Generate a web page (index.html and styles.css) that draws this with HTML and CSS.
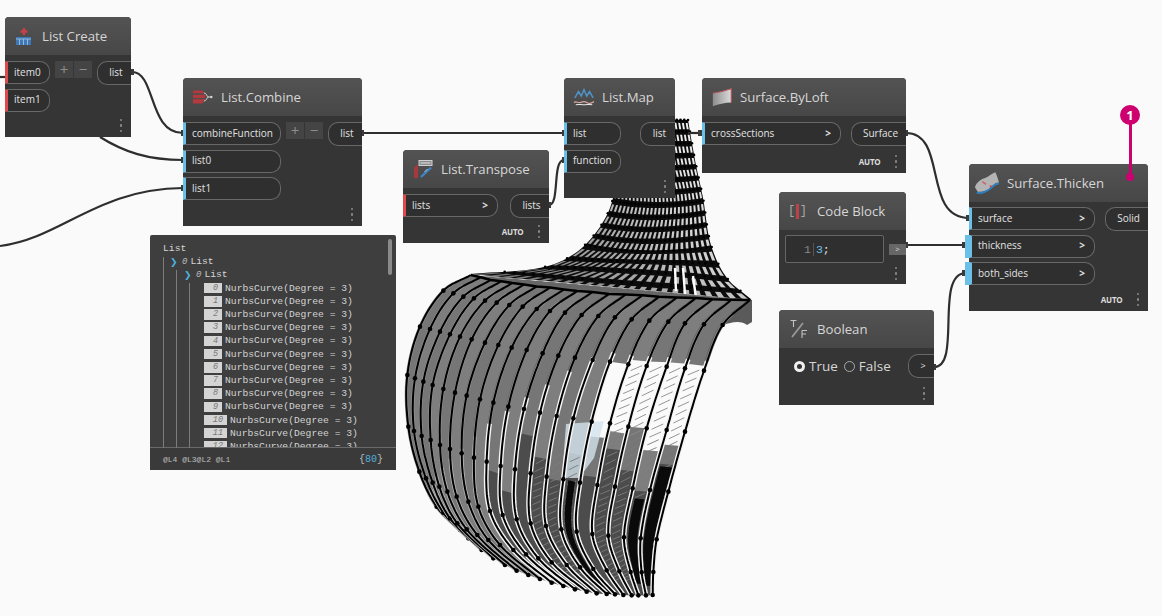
FILE: index.html
```html
<!DOCTYPE html>
<html lang="en">
  <head>
    <meta charset="UTF-8" />
    <title>Surface.Thicken graph</title>
    <link rel="stylesheet" href="styles.css">
  </head>
  <body>
    <div class="canvas">
      <svg class="layer" id="surface" width="1162" height="616"></svg>

      <svg class="layer" width="1162" height="616">
        <g class="wires">
          <path d="M0 77H5" />
          <path d="M132 72C156 72 148 133 183 133" />
          <path d="M100 137C124 152 148 160 183 160" />
          <path d="M0 246C62 238 96 189 183 188" />
          <path d="M362 133H564" />
          <path d="M549 205C560 205 552 160 564 160" />
          <path d="M688 133H702" />
          <path d="M906 133C948 133 922 218 969 218" />
          <path d="M906 245H966" />
          <path d="M934 367C962 367 934 273 966 273" />
        </g>
        <g class="stubs">
          <path d="M131 72h3M181 133h3M181 160h3M181 188h3M361 133h3M562 133h3M562 160h3M548 205h3" />
          <path d="M698 133h4M905 133h3M966 218h3M905 245h3M962 245h3M933 367h3M962 273h3" />
        </g>
      </svg>

      <!-- List Create -->
      <div class="node node-create">
        <div class="node-head">
          <svg class="icon" viewBox="0 0 22 22">
            <path d="M11 3v7M7.500 6.500h7" stroke="#c8404a" stroke-width="2.400" fill="none" />
            <rect x="3" y="12" width="15" height="8" fill="#3f78b5" />
            <path d="M3 14h15M6.500 14v6M10.500 14v6M14.500 14v6" stroke="#8fb8dd" stroke-width="1" fill="none" />
          </svg>
          <span class="node-title">List Create</span>
        </div>
        <div class="node-body">
          <div class="inputs">
            <div class="port port-red">item0</div>
            <div class="port port-red">item1</div>
          </div>
          <div class="add-remove"><span class="mini">+</span><span class="mini">−</span></div>
          <div class="out">list</div>
        </div>
        <div class="node-foot"><span class="dots"><i></i><i></i><i></i></span></div>
      </div>

      <!-- List.Combine -->
      <div class="node node-combine">
        <div class="node-head">
          <svg class="icon" viewBox="0 0 24 22">
            <path d="M1 4h10l3 3H1zM1 8.500h13.500v3.500H1zM1 13.500h13.500L11 18H1z" fill="#b23a3e" />
            <path d="M13 6.500c3 0 3 4.500 5 4.500c-2 0-2 4.500-5 4.500M17 11h5" stroke="#d8d8d8" stroke-width="1" fill="none" />
            <circle cx="21" cy="11" r="1.300" fill="#d8d8d8" />
          </svg>
          <span class="node-title">List.Combine</span>
        </div>
        <div class="node-body">
          <div class="inputs">
            <div class="port port-blue">combineFunction</div>
            <div class="port port-blue">list0</div>
            <div class="port port-blue">list1</div>
          </div>
          <div class="add-remove"><span class="mini">+</span><span class="mini">−</span></div>
          <div class="out">list</div>
        </div>
        <div class="node-foot"><span class="dots"><i></i><i></i><i></i></span></div>
      </div>

      <!-- List.Transpose -->
      <div class="node node-transpose">
        <div class="node-head">
          <svg class="icon" viewBox="0 0 22 22">
            <rect x="7" y="2.500" width="13" height="5" fill="#8c8c8c" stroke="#d0d0d0" stroke-width="1" />
            <path d="M8.500 5h10" stroke="#e4e4e4" stroke-width="1" fill="none" />
            <path d="M2 9.500l4-3V20H2z" fill="#a8383c" />
            <path d="M9 19L19 9.500" stroke="#3f86c4" stroke-width="2.400" fill="none" />
            <path d="M12.500 14l3-3" stroke="#a9cfe8" stroke-width="1" fill="none" />
          </svg>
          <span class="node-title">List.Transpose</span>
        </div>
        <div class="node-body">
          <div class="inputs">
            <div class="port port-red">lists<b>&gt;</b></div>
          </div>
          <div class="out">lists</div>
        </div>
        <div class="node-foot"><span class="auto">AUTO</span><span class="dots"><i></i><i></i><i></i></span></div>
      </div>

      <!-- List.Map -->
      <div class="node node-map">
        <div class="node-head">
          <svg class="icon" viewBox="0 0 24 22">
            <path d="M2 12l4-7 3 5 3-7 3 7 3-5 4 7" stroke="#4e92c8" stroke-width="1.700" fill="none" />
            <path d="M1 17c3-2 4 1 7 0s4-2 7 0 4 1 8-1" stroke="#d9a9a4" stroke-width="1.400" fill="none" />
            <path d="M3 19.500c3-1 5 0 9 0s6-1 9 0" stroke="#e8e8e8" stroke-width="1.100" fill="none" />
          </svg>
          <span class="node-title">List.Map</span>
        </div>
        <div class="node-body">
          <div class="inputs">
            <div class="port port-blue">list</div>
            <div class="port port-blue">function</div>
          </div>
          <div class="out">list</div>
        </div>
        <div class="node-foot"><span class="dots"><i></i><i></i><i></i></span></div>
      </div>

      <!-- Surface.ByLoft -->
      <div class="node node-loft">
        <div class="node-head">
          <svg class="icon" viewBox="0 0 24 22">
            <defs>
              <linearGradient id="loftFill" x1="0" x2="1" y1="0" y2="0">
                <stop offset="0" stop-color="#8c8c8c" />
                <stop offset="1" stop-color="#dcdcdc" />
              </linearGradient>
            </defs>
            <path d="M2 7c6-1 14-3 20-5v15c-7 0-14 2-20 4z" fill="url(#loftFill)" />
            <path d="M2 7c6-1 14-3 20-5v15" stroke="#b9555e" stroke-width="1.100" fill="none" />
          </svg>
          <span class="node-title">Surface.ByLoft</span>
        </div>
        <div class="node-body">
          <div class="inputs">
            <div class="port port-blue">crossSections<b>&gt;</b></div>
          </div>
          <div class="out">Surface</div>
        </div>
        <div class="node-foot"><span class="auto">AUTO</span><span class="dots"><i></i><i></i><i></i></span></div>
      </div>

      <!-- Code Block -->
      <div class="node node-code">
        <div class="node-head">
          <span class="code-icon"><span>[</span><i></i><span>]</span></span>
          <span class="node-title">Code Block</span>
        </div>
        <div class="code-body">
          <div class="code-input"><span class="line-no">1</span><span class="code-text"><em>3</em>;</span></div>
          <span class="code-out">&gt;</span>
        </div>
        <div class="node-foot"><span class="dots"><i></i><i></i><i></i></span></div>
      </div>

      <!-- Boolean -->
      <div class="node node-bool">
        <div class="node-head">
          <svg class="icon" viewBox="0 0 22 22">
            <path d="M4 19L15 5" stroke="#9a9a9a" stroke-width="1.800" fill="none" />
            <path d="M2.500 2.500h6M5.500 2.500V9M14 12.500h5M14 12.500V20M14 16h4" stroke="#c4c4c4" stroke-width="1.100" fill="none" />
          </svg>
          <span class="node-title">Boolean</span>
        </div>
        <div class="bool-body">
          <span class="radio radio-on"></span><span class="radio-label">True</span>
          <span class="radio"></span><span class="radio-label">False</span>
          <div class="out out-bool">&gt;</div>
        </div>
        <div class="node-foot"><span class="dots"><i></i><i></i><i></i></span></div>
      </div>

      <!-- Surface.Thicken -->
      <div class="node node-thicken">
        <div class="node-head">
          <svg class="icon icon-wide" viewBox="0 0 28 27">
            <path d="M1 18C3 12 8 9 12 8C16 7 19 3 23 2C25 6 26 10 27 13C22 13 20 17 16 20C12 23 7 23 4 23Z" fill="#b4b4b4" />
            <path d="M3 24C8 25 13 23 17 20C20 17 23 14 27 14" stroke="#2f7fc0" stroke-width="2" fill="none" />
            <path d="M9 12l4 3" stroke="#c8646a" stroke-width="1.600" fill="none" />
            <circle cx="18" cy="17" r="1.200" fill="#c8464e" />
          </svg>
          <span class="node-title">Surface.Thicken</span>
        </div>
        <div class="node-body">
          <div class="inputs">
            <div class="port port-blue">surface<b>&gt;</b></div>
            <div class="port port-blue port-linked">thickness<b>&gt;</b></div>
            <div class="port port-blue port-linked">both_sides<b>&gt;</b></div>
          </div>
          <div class="out">Solid</div>
        </div>
        <div class="node-foot"><span class="auto">AUTO</span><span class="dots"><i></i><i></i><i></i></span></div>
      </div>

      <!-- Watch preview -->
      <div class="watch">
        <span class="scroll-thumb"></span>
        <span class="guide guide-1"></span>
        <span class="guide guide-2"></span>
        <span class="guide guide-3"></span>
        <div class="watch-list" id="watchList">
          <div class="watch-row">List</div>
          <div class="watch-row level-1"><span class="chevron">❯</span><i>0</i>List</div>
          <div class="watch-row level-2"><span class="chevron">❯</span><i>0</i>List</div>
        </div>
        <div class="watch-foot">
          <span class="levels">@L4 @L3@L2 @L1</span>
          <span class="count">{<em>80</em>}</span>
        </div>
      </div>

      <!-- Annotation marker -->
      <div class="marker">
        <span class="marker-badge">1</span>
        <span class="marker-line"></span>
        <span class="marker-dot"></span>
      </div>
    </div>
    <script src="script.js"></script>
  </body>
</html>
```

FILE: styles.css
```css
* {
  box-sizing: border-box;
}

body {
  margin: 0;
  background-color: #fafafa;
  font-family: "Open Sans", sans-serif;
}

.canvas {
  position: relative;
  width: 1162px;
  height: 616px;
  overflow: hidden;
  background-color: #fafafa;
}

.layer {
  position: absolute;
  left: 0;
  top: 0;
}

.wires path {
  fill: none;
  stroke: #2e2e2e;
  stroke-width: 2.200;
}

.stubs path {
  fill: none;
  stroke: #3a3a3a;
  stroke-width: 6;
}

/* Nodes */
.node {
  position: absolute;
  display: flex;
  flex-direction: column;
  background-color: #353535;
  border-radius: 4px 4px 0 0;
  color: #e2e2e2;
}

.node-create { left: 5px; top: 17px; width: 126px; height: 120px; }
.node-combine { left: 183px; top: 78px; width: 179px; height: 148px; }
.node-transpose { left: 403px; top: 150px; width: 146px; height: 93px; }
.node-map { left: 564px; top: 78px; width: 111px; height: 120px; }
.node-loft { left: 702px; top: 78px; width: 204px; height: 95px; }
.node-code { left: 779px; top: 192px; width: 127px; height: 92px; }
.node-bool { left: 779px; top: 310px; width: 155px; height: 95px; }
.node-thicken { left: 969px; top: 164px; width: 179px; height: 147px; }

.node-head {
  display: flex;
  align-items: center;
  gap: 7px;
  height: 38px;
  flex-shrink: 0;
  padding-left: 9px;
  background: linear-gradient(#535353, #474747);
  border-radius: 4px 4px 0 0;
}

.node-create .node-head { padding-left: 8px; }
.node-thicken .node-head { padding-left: 5px; }
.node-thicken .node-body { padding-top: 5px; }

.node-title {
  font-size: 13.2px;
  color: #d6d6d6;
  white-space: nowrap;
}

.icon {
  width: 22px;
  height: 22px;
  flex-shrink: 0;
}

.icon-wide {
  width: 26px;
  height: 26px;
}

.node-body {
  display: flex;
  justify-content: space-between;
  padding-top: 6px;
}

.inputs {
  display: flex;
  flex-direction: column;
  gap: 4.5px;
}

.node-create .inputs { width: 45px; }
.node-combine .inputs { width: 98px; }
.node-transpose .inputs { width: 95px; }
.node-map .inputs { width: 57px; }
.node-loft .inputs { width: 139px; }
.node-thicken .inputs { width: 126px; }

.port {
  display: flex;
  align-items: center;
  justify-content: space-between;
  height: 23px;
  padding: 0 9px 2px 6px;
  font-size: 10px;
  background-color: #2f2f2f;
  border: 1px solid #686868;
  border-left: 3px solid;
  border-radius: 0 10px 10px 0;
}

.port b {
  font-weight: 700;
  font-size: 10px;
}

.port-red { border-left-color: #e0484e; }
.port-blue { border-left-color: #6ac0e7; }
.port-linked { box-shadow: -4px 0 0 #6ac0e7; }

.out {
  display: flex;
  align-items: center;
  justify-content: center;
  height: 24px;
  padding: 0 5px 2px 8px;
  font-size: 10px;
  background-color: #2f2f2f;
  border: 1px solid #686868;
  border-right: 0;
  border-radius: 10px 0 0 10px;
}

.node-create .out { width: 34px; }
.node-combine .out { width: 34px; }
.node-transpose .out { width: 39px; }
.node-map .out { width: 35px; }
.node-loft .out { width: 55px; }
.node-thicken .out { width: 43px; }

.add-remove {
  display: flex;
  gap: 1px;
  margin-left: 5px;
  margin-right: auto;
}

.mini {
  display: flex;
  align-items: center;
  justify-content: center;
  width: 18px;
  height: 17px;
  font-size: 15px;
  line-height: 1;
  color: #8c8c8c;
  background-color: #444;
}

.node-foot {
  display: flex;
  justify-content: flex-end;
  align-items: center;
  gap: 14px;
  margin-top: auto;
  height: 23px;
  padding-right: 9px;
}

.auto {
  font-size: 8px;
  font-weight: 700;
  letter-spacing: -0.2px;
  color: #dcdcdc;
}

.dots {
  display: flex;
  flex-direction: column;
  gap: 3px;
}

.dots i {
  width: 2.5px;
  height: 2.5px;
  border-radius: 50%;
  background-color: #8a8a8a;
}

/* Code block */
.code-icon {
  display: flex;
  align-items: center;
  justify-content: space-between;
  width: 19px;
  margin-right: 3px;
  font-family: "Liberation Mono", monospace;
  font-size: 12px;
  color: #a8a8a8;
}

.code-icon i {
  width: 3px;
  height: 15px;
  background-color: #b8444a;
}

.code-body {
  display: flex;
  align-items: center;
  justify-content: space-between;
  padding: 5px 0 0 6px;
}

.code-input {
  display: flex;
  align-items: center;
  width: 99px;
  height: 28px;
  padding-left: 18px;
  font-family: "Liberation Mono", monospace;
  font-size: 11.5px;
  border: 1px solid #666;
  border-radius: 2px;
  background-color: #2f2f2f;
}

.line-no {
  padding-right: 2px;
  color: #888;
  border-right: 1px solid #555;
}

.code-text {
  padding-left: 2px;
}

.code-text em {
  font-style: normal;
  color: #6ac0e7;
}

.code-out {
  width: 17px;
  height: 11px;
  font-size: 8px;
  line-height: 10px;
  text-align: center;
  color: #ddd;
  background-color: #666;
}

/* Boolean */
.bool-body {
  display: flex;
  align-items: center;
  padding: 6px 0 0 15px;
}

.radio {
  width: 11px;
  height: 11px;
  border: 1px solid #aaa;
  border-radius: 50%;
  margin-right: 4px;
}

.radio-on {
  border: 3px solid #f0f0f0;
  background-color: #333;
}

.radio-label {
  margin-right: 6px;
  font-size: 13.5px;
  color: #d6d6d6;
}

.out-bool {
  width: 26px;
  margin-left: auto;
  font-size: 9px;
}

/* Watch */
.watch {
  position: absolute;
  left: 150px;
  top: 235px;
  width: 246px;
  height: 235px;
  background-color: #3e3e3e;
  border-radius: 2px;
  font-family: "Liberation Mono", monospace;
  font-size: 9.7px;
  color: #d4d4d4;
}

.watch-list {
  height: 212px;
  padding: 7px 0 0 13px;
  overflow: hidden;
}

.watch-row {
  display: flex;
  align-items: center;
  height: 13.2px;
  white-space: nowrap;
}

.watch-row i {
  margin-right: 3px;
  font-size: 9px;
  color: #bbb;
}

.level-1 { padding-left: 7px; }
.level-2 { padding-left: 21px; }

.chevron {
  width: 12px;
  font-size: 9px;
  font-family: "DejaVu Sans", sans-serif;
  color: #4fb0df;
}

.level-3 { padding-left: 41px; }

.index-box {
  width: 18px;
  height: 10.5px;
  margin-right: 3px;
  padding-right: 4px;
  font-size: 8.5px;
  font-style: italic;
  line-height: 10.5px;
  text-align: right;
  color: #777;
  background-color: #d4d4d4;
}

.index-wide { width: 23px; }

.guide {
  position: absolute;
  top: 22px;
  bottom: 22px;
  width: 1px;
  background-color: #7c7c7c;
}

.guide-1 { left: 13px; }
.guide-2 { left: 26px; top: 35px; }
.guide-3 { left: 39px; top: 48px; }

.scroll-thumb {
  position: absolute;
  left: 238px;
  top: 4px;
  width: 4px;
  height: 36px;
  border-radius: 2px;
  background-color: #8a8a8a;
}

.watch-foot {
  display: flex;
  justify-content: space-between;
  align-items: center;
  height: 23px;
  padding: 1px 13px;
  font-size: 8px;
  border-top: 1px solid #6a6a6a;
  background-color: #3a3a3a;
  color: #bdbdbd;
}

.count {
  font-size: 10px;
}

.count em {
  font-style: normal;
  color: #4fb0df;
}

/* Annotation */
.marker {
  position: absolute;
  left: 1120px;
  top: 105px;
  display: flex;
  flex-direction: column;
  align-items: center;
  width: 20px;
}

.marker-badge {
  width: 20px;
  height: 20px;
  border-radius: 50%;
  font-size: 13px;
  font-weight: 700;
  line-height: 20px;
  text-align: center;
  color: #fff;
  background-color: #ce0070;
}

.marker-line {
  width: 3px;
  height: 52px;
  margin-top: -1px;
  background-color: #ce0070;
}

.marker-dot {
  width: 8px;
  height: 8px;
  margin-top: -3px;
  border-radius: 50%;
  background-color: #ce0070;
}
```

FILE: script.js
```js
// Fill in the watch rows
const watchList = document.getElementById("watchList");
for (let i = 0; i <= 12; i++) {
  const row = document.createElement("div");
  row.className = "watch-row level-3";
  const box = document.createElement("span");
  box.className = i > 9 ? "index-box index-wide" : "index-box";
  box.textContent = i;
  row.appendChild(box);
  row.appendChild(document.createTextNode("NurbsCurve(Degree = 3)"));
  watchList.appendChild(row);
}

// Draw the lofted surface: back funnel first, then the front ribs
const svg = document.getElementById("surface");

function add(name, attrs) {
  const el = document.createElementNS("http://www.w3.org/2000/svg", name);
  for (const key in attrs) el.setAttribute(key, attrs[key]);
  svg.appendChild(el);
  return el;
}

function toPath(points) {
  return "M" + points.map((p) => p[0].toFixed(1) + " " + p[1].toFixed(1)).join("L");
}

// point across a row: a bow through 3 points, or straight pieces for a longer row
function across(row, u) {
  if (row.length === 3) {
    const a = (2 * u - 1) * (u - 1);
    const b = 4 * u * (1 - u);
    const c = u * (2 * u - 1);
    return [
      a * row[0][0] + b * row[1][0] + c * row[2][0],
      a * row[0][1] + b * row[1][1] + c * row[2][1],
    ];
  }
  const at = Math.max(0, Math.min(u, 1)) * (row.length - 1);
  const i = Math.min(Math.floor(at), row.length - 2);
  const t = at - i;
  return [
    row[i][0] + (row[i + 1][0] - row[i][0]) * t,
    row[i][1] + (row[i + 1][1] - row[i][1]) * t,
  ];
}

function unit(a, b) {
  const d = Math.hypot(b[0] - a[0], b[1] - a[1]) || 1;
  return [(b[0] - a[0]) / d, (b[1] - a[1]) / d];
}

// hermite curve through the rows, s is measured in row indexes
function surfacePoint(rows, u, s) {
  const i = Math.max(0, Math.min(Math.floor(s), rows.length - 2));
  const t = s - i;
  const p1 = across(rows[i], u);
  const p2 = across(rows[i + 1], u);
  const p0 = i > 0 ? across(rows[i - 1], u) : p1;
  const p3 = i < rows.length - 2 ? across(rows[i + 2], u) : p2;
  const chord = Math.hypot(p2[0] - p1[0], p2[1] - p1[1]);
  const m1 = unit(p0, p2);
  const m2 = unit(p1, p3);
  const t2 = t * t;
  const t3 = t2 * t;
  return [0, 1].map((k) =>
    (2 * t3 - 3 * t2 + 1) * p1[k] + (t3 - 2 * t2 + t) * chord * m1[k] +
    (3 * t2 - 2 * t3) * p2[k] + (t3 - t2) * chord * m2[k]
  );
}

function curve(rows, u, from, to) {
  const pts = [];
  const steps = Math.max(6, Math.round((to - from) * 12));
  for (let n = 0; n <= steps; n++) pts.push(surfacePoint(rows, u, from + ((to - from) * n) / steps));
  return pts;
}

function band(rows, u1, u2, from, to) {
  return toPath(curve(rows, u1, from, to).concat(curve(rows, u2, from, to).reverse())) + "Z";
}

// Back funnel
const backRows = [
  [[598, 118], [643, 119], [688, 120]],
  [[606, 160], [650, 161], [695, 160]],
  [[613, 198], [658, 202], [703, 198]],
  [[587, 243], [648, 250], [711, 245]],
  [[548, 266], [636, 270], [727, 278]],
  [[470, 274], [610, 291], [752, 300]],
];
add("path", { d: band(backRows, 0, 1, 0, 5), fill: "#0c0c0c" });

const backRibs = 24;
let s = 0;
while (s < 4.7) {
  const seg = Math.floor(s);
  const dy = across(backRows[seg + 1], 0.75)[1] - across(backRows[seg], 0.75)[1];
  const ds = 12 / dy;
  for (let i = 0; i < backRibs; i++) {
    const u1 = (i + 0.24) / backRibs;
    const u2 = (i + 0.76) / backRibs;
    const a = surfacePoint(backRows, u1, s + ds * 0.26);
    const b = surfacePoint(backRows, u2, s + ds * 0.26);
    const c = surfacePoint(backRows, u2, s + ds * 0.8);
    const d = surfacePoint(backRows, u1, s + ds * 0.8);
    const shade = Math.round(240 - s * 8 - (1 - i / backRibs) * s * 20);
    add("path", { d: toPath([a, b, c, d]) + "Z", fill: "rgb(" + shade + "," + shade + "," + shade + ")" });
  }
  for (let i = 0; i <= backRibs; i += 1) {
    const p = surfacePoint(backRows, i / backRibs, s);
    add("circle", { cx: p[0], cy: p[1], r: 1.3, fill: "#000" });
  }
  s += ds;
}

// White slivers where the funnel opens
[[675, 268, 676, 291], [683, 268, 685, 294], [693, 276, 696, 298]].forEach((l) => {
  add("path", { d: "M" + l[0] + " " + l[1] + "L" + l[2] + " " + l[3], stroke: "#fff", "stroke-width": 2.4 });
});

// Front ribs: control points read off the reference at 3x, 400/230 is the crop origin
const measured = [
  [[130,182],[160,190],[190,200],[222,205],[255,212],[290,218],[328,225],[368,230],[410,237],[450,243],[495,248],[545,255],[595,258],[645,262],[695,268],[748,272],[805,275],[855,280],[912,283],[968,285]],
  [[60,290],[90,297],[120,305],[150,313],[180,320],[215,328],[255,338],[295,345],[335,353],[380,360],[428,370],[475,377],[525,383],[578,390],[630,395],[685,403],[740,408],[800,410],[855,415],[912,422]],
  [[22,435],[45,445],[70,455],[98,465],[130,477],[165,488],[200,497],[240,508],[280,518],[325,530],[372,537],[420,548],[470,558],[520,565],[575,575],[630,580],[685,590],[740,595],[800,600],[855,605]],
  [[25,590],[42,603],[65,618],[92,630],[120,645],[150,657],[185,670],[222,683],[260,695],[302,708],[345,718],[392,730],[440,740],[490,748],[540,758],[592,765],[645,770],[698,775],[750,780],[805,785]],
  [[58,725],[78,745],[98,758],[118,770],[142,785],[170,800],[205,815],[235,830],[270,843],[308,855],[350,868],[392,880],[438,888],[484,898],[530,905],[577,912],[625,917],[672,922],[722,925],[770,928]],
  [[110,830],[130,848],[150,865],[172,880],[200,898],[232,915],[265,930],[300,945],[340,960],[378,973],[415,985],[455,997],[500,1005],[540,1012],[580,1017],[620,1021],[658,1024],[692,1026],[725,1027],[760,1026]],
  [[180,900],[205,925],[245,960],[280,985],[315,1005],[350,1022],[385,1035],[420,1047],[455,1058],[490,1068],[525,1078],[560,1085],[590,1090],[620,1092],[645,1093],[670,1095],[695,1096],[715,1096],[738,1096],[758,1095]],
];
const topRow = measured[0].map((p, i) => [p[0] + 82, p[1] - 47 - (28 * i) / 19]);
const frontRows = [topRow].concat(measured).map((row) => row.map((p) => [400 + p[0] / 3, 230 + p[1] / 3]));
const lastRow = frontRows.length - 1;

const ribs = 20;
const du = 1 / (ribs - 1);
add("path", { d: band(frontRows, 0, 1, 0, lastRow), fill: "#666" });

// end cap at the right tip
add("path", { d: "M735 298L752 300V322L747 325C742 320 730 322 724 325Z", fill: "#5a5a5a" });

// where a rib turns white, lower down on the left
function whiteFrom(i) {
  return Math.min(lastRow, Math.max(1.8, 5.6 - 0.28 * i));
}

// the gaps between the ribs
for (let g = 0; g < ribs - 1; g++) {
  const u = g * du;
  const shade = 118 + (g % 2) * 8;
  add("path", { d: band(frontRows, u + du * 0.1, u + du * 0.85, 0, lastRow), fill: "rgb(" + shade + "," + shade + "," + shade + ")" });
  if (g >= 8) {
    const from = 3.4 + ((g * 7) % 5) * 0.16 + (g < 10 ? 0.6 : 0);
    add("path", { d: band(frontRows, u, u + du, from, lastRow), fill: "#4c4c4c" });
  }
  // open gaps near the right edge, the background shows through
  if (g >= 14) {
    const to = 3 + ((g * 3) % 4) * 0.12;
    add("path", { d: band(frontRows, u, u + du, g === 14 ? 2 : 1.9, to), fill: "#fafafa" });
  }
}

// pale patch on the surface
add("path", { d: "M566 424L604 421L594 458L579 478L562 478Z", fill: "#d3e3ec", opacity: 0.8 });

// hatching seen through the gaps
for (let g = 11; g < 19; g++) {
  if (g === 14) continue;
  const u = g * du;
  const from = g > 14 ? 2.1 : 3.7;
  for (let v = from; v < 6.4; v += 0.13) {
    const a = surfacePoint(frontRows, u + du * 0.25, v);
    const b = surfacePoint(frontRows, u + du * 0.75, v - 0.1);
    const color = v < 3.2 ? "#8a8a8a" : "#7c7c7c";
    add("path", { d: toPath([a, b]), stroke: color, "stroke-width": 0.9 });
  }
}

// solid dark stripes on the lower right
[[18.2, 18.85, 3.6, 6.6], [17.25, 17.8, 4.2, 6.5], [13.3, 13.7, 4, 7]].forEach((b) => {
  add("path", { d: band(frontRows, b[0] * du, b[1] * du, b[2], b[3]), fill: "#0a0a0a" });
});

// the ribs: light halo, then the black line and its control points
for (let i = 0; i < ribs; i++) {
  const u = i * du;
  add("path", {
    d: toPath(curve(frontRows, u, 0.6, lastRow)),
    fill: "none",
    stroke: "#9c9c9c",
    "stroke-width": 3,
  });
  add("path", {
    d: toPath(curve(frontRows, u, whiteFrom(i), lastRow)),
    fill: "none",
    stroke: i < 8 ? "#b4b4b4" : "#f4f4f4",
    "stroke-width": i < 8 ? 3.600 : 4.800,
  });
  add("path", {
    d: toPath(curve(frontRows, u, 0, lastRow)),
    fill: "none",
    stroke: "#000",
    "stroke-width": 2,
  });
  for (let r = 1; r <= lastRow; r++) {
    const p = surfacePoint(frontRows, u, r);
    add("circle", { cx: p[0], cy: p[1], r: 2.300, fill: "#000" });
  }
}

// ridge where the ribs start
add("path", {
  d: toPath(frontRows[0]),
  fill: "none",
  stroke: "#000",
  "stroke-width": 2.500,
});
```
